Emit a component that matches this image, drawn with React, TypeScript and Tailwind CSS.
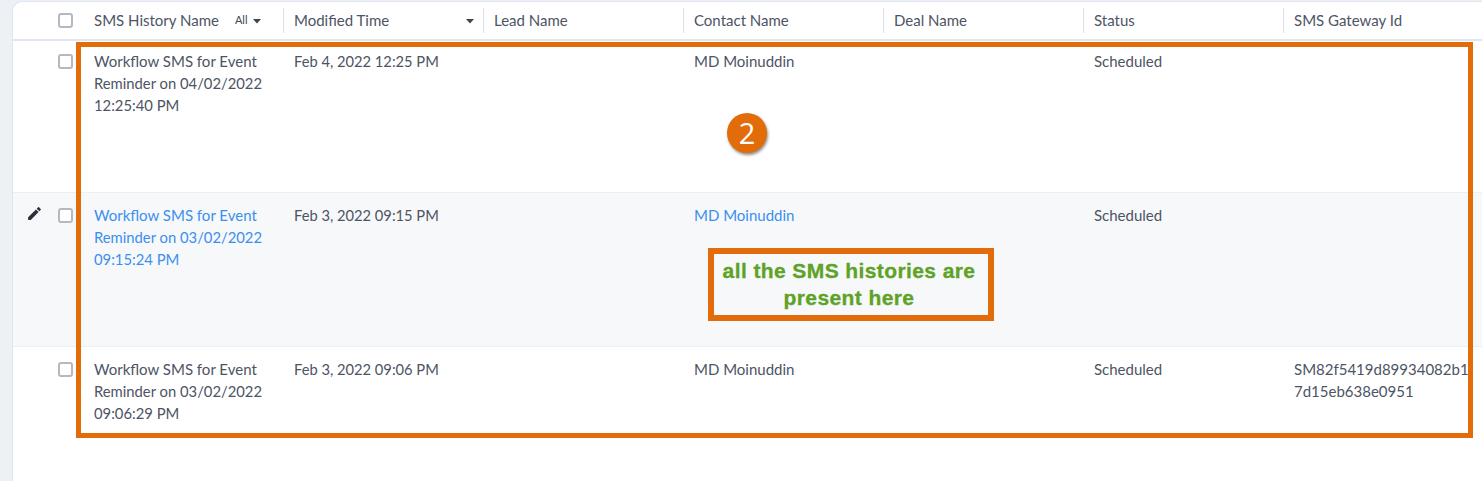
const font = "font-['Lato','Noto_Sans',sans-serif]";

function Box() {
  return <span className="block w-[15px] h-[15px] rounded-[3px] border-2 border-[#b4b8c0] bg-white" />;
}

function Caret({ className }: { className: string }) {
  return (
    <svg width="9" height="5" viewBox="0 0 9 5" className={className}>
      <path d="M0 0h8L4 4.5z" fill="#3f4552" />
    </svg>
  );
}

function Head({ label, children }: { label: string; children?: React.ReactNode }) {
  return (
    <div className="flex items-center h-[25px] pl-[10px] border-r border-[#dde1e8] relative">
      <span className="mt-[-2px]">{label}</span>
      {children}
    </div>
  );
}

function Row({
  name, time, contact, gateway, hover, first,
}: { name: string[]; time: string; contact: string; gateway?: string[]; hover?: boolean; first?: boolean }) {
  const link = hover ? "text-[#3b8fef]" : "";
  return (
    <div className={`grid grid-cols-[71px_repeat(7,200px)] border-b border-[#eceff4] ${first ? "h-[152px] pt-[9px]" : "h-[154px] pt-[11px]"} ${hover ? "bg-[#f7f8fa]" : ""}`}>
      <div className="flex justify-end items-start pr-[11px] pt-[4px] gap-[15px]">
        {hover && (
          <svg width="17" height="17" viewBox="0 0 24 24" className="mt-[-3px]">
            <path d="M3 17.25V21h3.75L17.81 9.94l-3.75-3.75L3 17.25zM20.71 7.04a1 1 0 0 0 0-1.41l-2.34-2.34a1 1 0 0 0-1.41 0l-1.83 1.83 3.75 3.75 1.83-1.83z" fill="#2b303b" />
          </svg>
        )}
        <Box />
      </div>
      <div className={`pl-[10px] pr-[15px] ${link}`}>
        <div>{name[0]}</div>
        <div className="text-[14.8px]">{name[1]}</div>
        <div className="text-[14.8px]">{name[2]}</div>
      </div>
      <div className="pl-[10px] text-[14.7px]">{time}</div>
      <div />
      <div className={`pl-[10px] ${link}`}>{contact}</div>
      <div />
      <div className="pl-[10px]">Scheduled</div>
      <div className="pl-[10px]">{gateway?.map((l) => <div key={l}>{l}</div>)}</div>
    </div>
  );
}

export default function App() {
  return (
    <div className={`${font} relative w-[1482px] h-[481px] overflow-hidden bg-[#edf0f5] pl-[12px] pt-px text-[15px] leading-[22px] text-[#4d5464]`}>
      <div className="w-[1470px] h-[480px] bg-white border-l border-t border-[#dfe5ee] rounded-tl-[10px]">
        <div className="grid grid-cols-[71px_repeat(7,200px)] items-center h-[39px] border-b-2 border-[#dfe6ef]">
          <div className="flex justify-end pr-[11px]"><Box /></div>
          <Head label="SMS History Name">
            <span className="ml-[16px] mt-[-1px] text-[11px] text-[#3f4552]">All</span>
            <Caret className="ml-[5px] mt-[1px]" />
          </Head>
          <Head label="Modified Time"><Caret className="absolute right-[8px] top-[11px]" /></Head>
          <Head label="Lead Name" />
          <Head label="Contact Name" />
          <Head label="Deal Name" />
          <Head label="Status" />
          <Head label="SMS Gateway Id" />
        </div>
        <Row first name={["Workflow SMS for Event", "Reminder on 04/02/2022", "12:25:40 PM"]} time="Feb 4, 2022 12:25 PM" contact="MD Moinuddin" />
        <Row hover name={["Workflow SMS for Event", "Reminder on 03/02/2022", "09:15:24 PM"]} time="Feb 3, 2022 09:15 PM" contact="MD Moinuddin" />
        <Row name={["Workflow SMS for Event", "Reminder on 03/02/2022", "09:06:29 PM"]} time="Feb 3, 2022 09:06 PM" contact="MD Moinuddin" gateway={["SM82f5419d89934082b1", "7d15eb638e0951"]} />
      </div>
      <div className="absolute left-[76px] top-[42px] w-[1397px] h-[396px] border-[5px] border-[#e36c0a]" />
      <div className="absolute left-[727px] top-[113px] w-[40px] h-[40px] rounded-full bg-[#e36c0a] shadow-[1px_2px_3px_rgba(0,0,0,0.45)] flex items-center justify-center text-white text-[29px] font-['Open_Sans',sans-serif]">2</div>
      <div className="absolute left-[708px] top-[248px] w-[286px] h-[73px] border-[6px] border-[#e36c0a] flex flex-col items-center justify-center pr-[4px] pb-[2px] text-[#5ea226] font-bold text-[21px] leading-[27px] tracking-[0.4px] [-webkit-text-stroke:0.3px_#5ea226] font-['Liberation_Sans',sans-serif]">
        <div>all the SMS histories are</div>
        <div>present here</div>
      </div>
    </div>
  );
}
